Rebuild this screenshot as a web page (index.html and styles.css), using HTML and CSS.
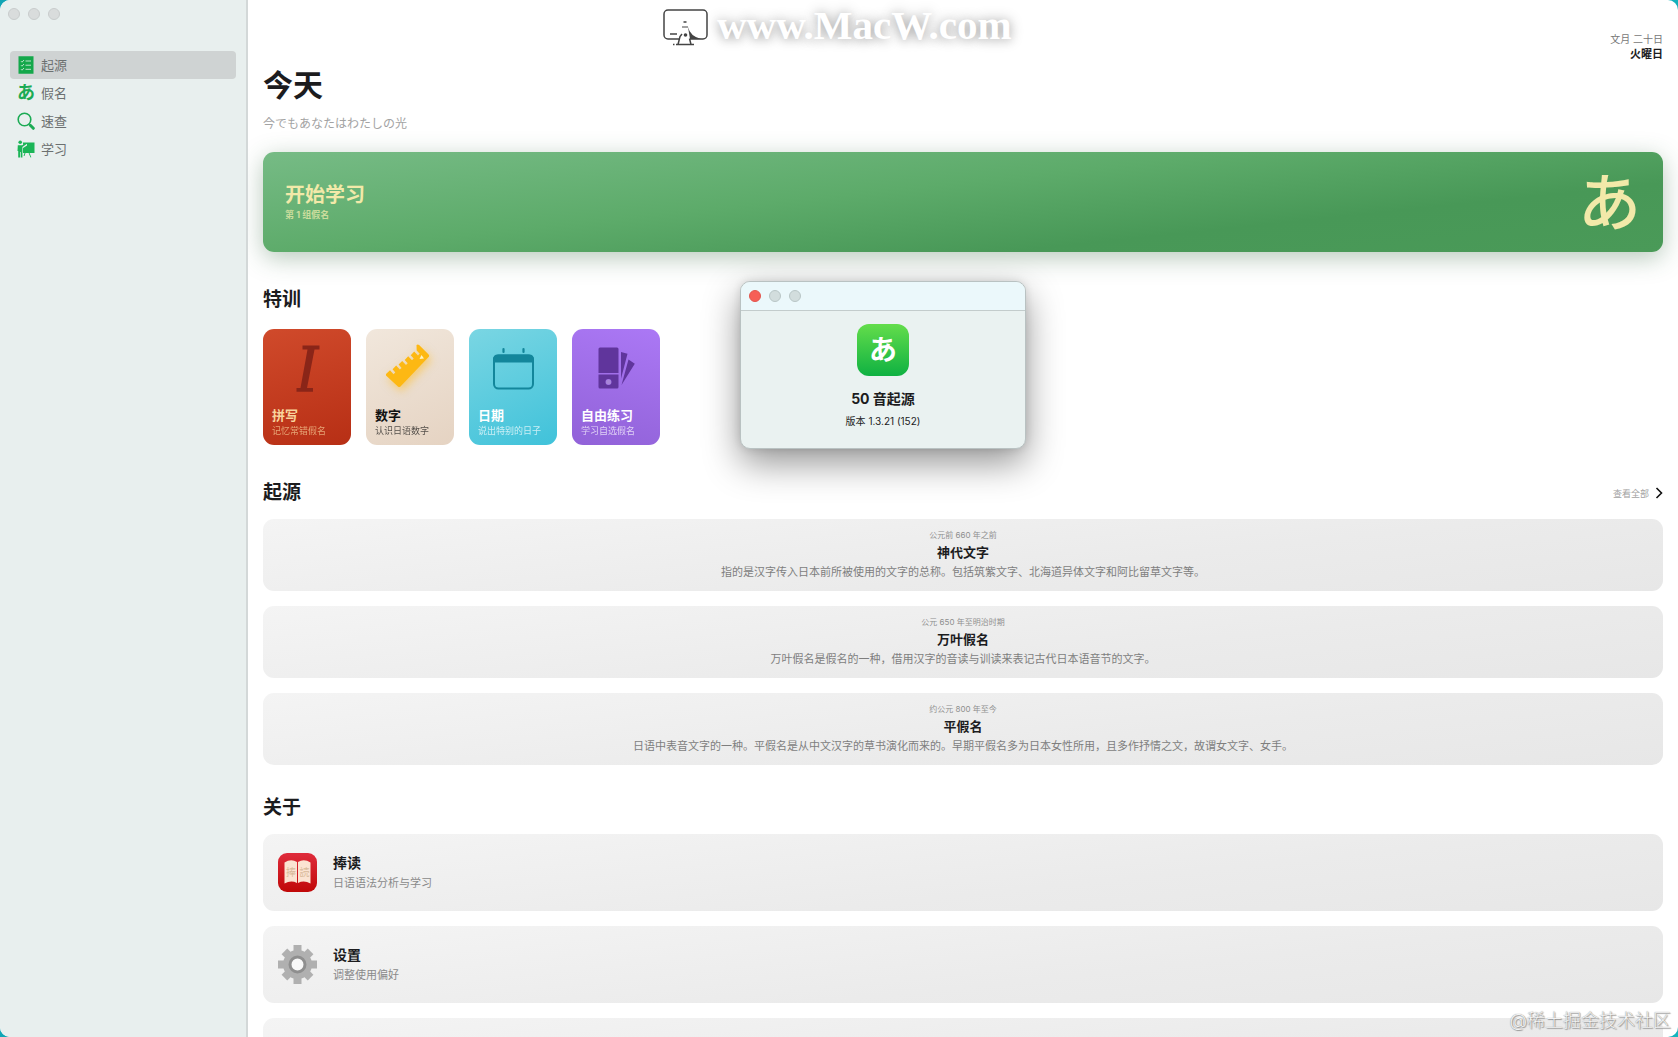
FILE: index.html
```html
<!DOCTYPE html>
<html lang="zh-CN">
<head>
<meta charset="utf-8">
<meta name="viewport" content="width=device-width, initial-scale=1">
<title>50音起源</title>
<link rel="stylesheet" href="styles.css">
</head>
<body>
<div class="window">
  <aside class="sidebar">
    <div class="lights">
      <button class="light" type="button" aria-label="关闭"></button>
      <button class="light" type="button" aria-label="最小化"></button>
      <button class="light" type="button" aria-label="缩放"></button>
    </div>
    <nav class="nav">
      <a class="nav-item nav-item-active" href="#origin">
        <svg class="nav-icon" viewBox="0 0 18 18" aria-hidden="true"><path fill="#14a84b" d="M1.500 0.300h15v17.400h-15z"/><path fill="none" stroke="#b9e3c8" stroke-width="1" d="M4 5.200l1 1 2-2.200M8.500 5H14M4 9.200l1 1 2-2.200M8.500 9.200H14M4 13.200l1 1 2-2.200M8.500 13.300H14"/></svg>
        <span class="nav-label">起源</span></a>
      <a class="nav-item" href="#kana">
        <span class="nav-icon nav-kana" lang="ja" aria-hidden="true">あ</span>
        <span class="nav-label">假名</span></a>
      <a class="nav-item" href="#search">
        <svg class="nav-icon" viewBox="0 0 18 18" aria-hidden="true"><circle cx="7.500" cy="7.500" r="6.300" fill="none" stroke="#1bab54" stroke-width="1.600"/><path stroke="#1bab54" stroke-width="3" stroke-linecap="round" d="M13.300 13.300l3 3"/></svg>
        <span class="nav-label">速查</span></a>
      <a class="nav-item" href="#study">
        <svg class="nav-icon" viewBox="0 0 18 18" aria-hidden="true"><g fill="#1bb557"><circle cx="3.200" cy="2.300" r="1.800"/><path d="M.8 5.200h4.400l3.200-1.700.6 1-3.600 2.500V17.500H3.700V12H3v5.500H1.200V11H.5z"/><path d="M6 2.500h11.500V13H6V8l4-2.500V4L6 5z"/><path d="M12.500 13l1.800 4.200-.8.200L11.600 13zM7.500 13h1l-1 3h-.9z"/></g></svg>
        <span class="nav-label">学习</span></a>
    </nav>
  </aside>

  <main class="main">
    <header class="header">
      <div class="headline">
        <h1 class="title">今天</h1>
        <p class="subtitle" lang="ja">今でもあなたはわたしの光</p>
      </div>
      <div class="today" lang="ja">
        <span class="today-date">文月 二十日</span>
        <span class="today-week">火曜日</span>
      </div>
    </header>

    <button class="banner" type="button">
      <span class="banner-text">
        <span class="banner-title">开始学习</span>
        <span class="banner-sub">第 1 组假名</span>
      </span>
      <span class="banner-kana" lang="ja">あ</span>
    </button>

    <section class="section">
      <h2 class="section-title">特训</h2>
      <div class="drills">
        <button class="drill drill-spell" type="button">
          <svg class="drill-icon" viewBox="0 0 48 52" aria-hidden="true"><path fill="#8a2518" d="M19.500 4.500H36.500v4h-5L24 47H30v3.800H13.500V47H17.500L24.500 8.500h-5z"/></svg>
          <span class="drill-title">拼写</span>
          <span class="drill-sub">记忆常错假名</span>
        </button>
        <button class="drill drill-number" type="button">
          <svg class="drill-icon ruler" viewBox="0 0 48 52" aria-hidden="true"><path fill="#fdb813" d="M0 33L4 29.200l3.500 4 1.800-1.700-2.700-3.200 3.600-3.700 3.600 4 1.800-1.700-3-3.300 3.600-3.700 3.800 4 1.700-1.700-3-3.300 3.500-3.700 3.800 4 1.700-1.700-3-3.300 3.500-3.600 3.800 3.800 1.700-1.700-3-3.300L30.500 4a2 2 0 0 1 2.600 0l9.500 9.500a2 2 0 0 1 0 2.600L14.500 45.500a2 2 0 0 1-2.600 0L0 34.500z"/><path fill="#fff3c4" d="M35.500 14l2.500 3.500-4.500.5z"/></svg>
          <span class="drill-title">数字</span>
          <span class="drill-sub">认识日语数字</span>
        </button>
        <button class="drill drill-date" type="button">
          <svg class="drill-icon" viewBox="0 0 48 52" aria-hidden="true"><rect x="5" y="14.500" width="39" height="33" rx="4.500" fill="none" stroke="#13869b" stroke-width="2"/><path fill="#13869b" d="M4 21.500V18a4.500 4.500 0 0 1 4.500-4.500h32A4.500 4.500 0 0 1 45 18v3.500z"/><path stroke="#13869b" stroke-width="2.200" stroke-linecap="round" d="M14.500 8v3M34.500 8v3"/></svg>
          <span class="drill-title">日期</span>
          <span class="drill-sub">说出特别的日子</span>
        </button>
        <button class="drill drill-free" type="button">
          <svg class="drill-icon" viewBox="0 0 48 52" aria-hidden="true"><g fill="#60359c"><path d="M8 6.500h17a1.500 1.500 0 0 1 1.500 1.500V32h-20V8A1.500 1.500 0 0 1 8 6.500z"/><path fill-rule="evenodd" d="M6.500 33.500h20V46a1.500 1.500 0 0 1-1.500 1.500H8A1.500 1.500 0 0 1 6.500 46zM16.500 38a3 3 0 1 0 0 6 3 3 0 0 0 0-6z"/><path d="M29 11l6.500 1.700-6.500 25zM36.500 18.500l6.300 4.300L29.500 44z"/></g><circle cx="16.500" cy="41" r="2.500" fill="#a886d8"/></svg>
          <span class="drill-title">自由练习</span>
          <span class="drill-sub">学习自选假名</span>
        </button>
      </div>
    </section>

    <section class="section" id="origin">
      <div class="section-head">
        <h2 class="section-title">起源</h2>
        <a class="more" href="#all">查看全部
          <svg class="more-icon" viewBox="0 0 8 12" aria-hidden="true"><path fill="none" stroke="#111" stroke-width="1.600" d="M1.500 1l5 5-5 5"/></svg>
        </a>
      </div>
      <div class="stack">
        <article class="era">
          <span class="era-date">公元前 660 年之前</span>
          <h3 class="era-title">神代文字</h3>
          <p class="era-text">指的是汉字传入日本前所被使用的文字的总称。包括筑紫文字、北海道异体文字和阿比留草文字等。</p>
        </article>
        <article class="era">
          <span class="era-date">公元 650 年至明治时期</span>
          <h3 class="era-title">万叶假名</h3>
          <p class="era-text">万叶假名是假名的一种，借用汉字的音读与训读来表记古代日本语音节的文字。</p>
        </article>
        <article class="era">
          <span class="era-date">约公元 800 年至今</span>
          <h3 class="era-title">平假名</h3>
          <p class="era-text">日语中表音文字的一种。平假名是从中文汉字的草书演化而来的。早期平假名多为日本女性所用，且多作抒情之文，故谓女文字、女手。</p>
        </article>
      </div>
    </section>

    <section class="section section-about">
      <h2 class="section-title">关于</h2>
      <div class="stack">
        <a class="about" href="#reader">
          <svg class="about-icon" viewBox="0 0 39 39" aria-hidden="true">
            <defs><linearGradient id="red" x1="0" y1="0" x2="0" y2="1"><stop offset="0" stop-color="#df2b3b"/><stop offset="1" stop-color="#c00808"/></linearGradient></defs>
            <rect width="39" height="39" rx="9" fill="url(#red)"/>
            <path fill="#fbe3d2" d="M6.500 9.500Q13 5.500 19 9v21Q13 27 6.500 30.500zM20 9q6-3.500 12.500.5v21Q26 27 20 30z"/>
            <text class="book-text" x="8" y="23">捧</text><text class="book-text" x="21.500" y="23">読</text>
          </svg>
          <span class="about-text"><span class="about-title">捧读</span><span class="about-sub">日语语法分析与学习</span></span>
        </a>
        <a class="about" href="#settings">
          <svg class="about-icon" viewBox="0 0 39 39" aria-hidden="true">
            <g fill="#b0b0b0"><circle cx="19.500" cy="19.500" r="14.500"/><path d="M15.500 0h8v39h-8z"/><path d="M0 15.500h39v8H0z"/><path d="M15.500 1h8v37h-8z" transform="rotate(45 19.500 19.500)"/><path d="M15.500 1h8v37h-8z" transform="rotate(-45 19.500 19.500)"/></g>
            <circle cx="19.500" cy="19.500" r="7.500" fill="#f8f8f8" stroke="#8f8f8f" stroke-width="3"/>
          </svg>
          <span class="about-text"><span class="about-title">设置</span><span class="about-sub">调整使用偏好</span></span>
        </a>
        <div class="about"></div>
      </div>
    </section>
  </main>
</div>

<div class="dialog" role="dialog" aria-labelledby="app-name">
  <div class="dialog-bar">
    <button class="light light-close" type="button" aria-label="关闭"></button>
    <button class="light light-off" type="button" aria-label="最小化"></button>
    <button class="light light-off" type="button" aria-label="缩放"></button>
  </div>
  <div class="dialog-body">
    <span class="app-icon" lang="ja">あ</span>
    <strong class="app-name" id="app-name">50 音起源</strong>
    <span class="app-version">版本 1.3.21 (152)</span>
  </div>
</div>

<div class="site-mark">
  <svg class="site-logo" viewBox="0 0 46 38" aria-hidden="true"><path fill="none" stroke="#444" stroke-width="1.500" d="M16 30H5a4 4 0 0 1-4-4V5a4 4 0 0 1 4-4h35a4 4 0 0 1 4 4v21a4 4 0 0 1-4 4H27M15 35.500l2-8 2-2.500M28 35.500l-1.500-6M13 35.500h18M10 35.500h1.500M7 25h7M20.500 13h3"/><path fill="#444" d="M25 18q2 9 13 12H27z"/><circle cx="22.500" cy="26" r="1.800" fill="#444"/><path stroke="#444" d="M19 18h6"/></svg>
  <span class="site-name">www.MacW.com</span>
</div>
<div class="credit">@稀土掘金技术社区</div>
</body>
</html>
```
FILE: styles.css
```css
* {
  box-sizing: border-box;
}

html,
body {
  height: 100%;
}

body {
  position: relative;
  margin: 0;
  overflow: hidden;
  background: linear-gradient(100deg, #12a5b5 60%, #14b5bd 99%);
  color: #1c1c1e;
  font-family: Inter, "Noto Sans CJK SC", sans-serif;
}

[lang="ja"] {
  font-family: Inter, "Noto Sans CJK JP", sans-serif;
}

h1,
h2,
h3,
p {
  margin: 0;
}

button {
  padding: 0;
  border: 0;
  font: inherit;
  text-align: left;
}

a {
  color: inherit;
  text-decoration: none;
}

.window {
  display: flex;
  height: 100%;
  overflow: hidden;
  border-radius: 10px;
  background: #fff;
}

/* Sidebar */

.sidebar {
  flex: 0 0 248px;
  padding: 8px 10px 0;
  border-right: 2px solid #d3d8d8;
  background: #e8efee;
}

.lights {
  display: flex;
  gap: 8px;
  margin-left: -2px;
}

.light {
  width: 12px;
  height: 12px;
  border: 1px solid #c8cccc;
  border-radius: 50%;
  background: #d9dcdc;
}

.nav {
  display: flex;
  flex-direction: column;
  margin-top: 31px;
}

.nav-item {
  display: flex;
  align-items: center;
  gap: 6px;
  height: 28px;
  padding: 0 7px;
  border-radius: 4px;
  color: #6c7070;
  font-size: 13px;
}

.nav-item-active {
  background: #cfd3d3;
}

.nav-icon {
  width: 18px;
  height: 18px;
}

.nav-label {
  padding-bottom: 2px;
}

.nav-kana {
  color: #1bab54;
  font-size: 18px;
  font-weight: 700;
  line-height: 18px;
}

/* Main column */

.main {
  flex: 1;
  min-width: 0;
  padding: 32px 15px 0;
  overflow: hidden;
}

.header {
  display: flex;
  justify-content: space-between;
}

.headline {
  padding-top: 32px;
}

.title {
  font-size: 30px;
  font-weight: 700;
  line-height: 42px;
}

.subtitle {
  margin-top: 9px;
  color: #a3a3a3;
  font-size: 12px;
  line-height: 18px;
}

.today {
  display: flex;
  flex-direction: column;
  align-items: flex-end;
  line-height: 15px;
}

.today-date {
  color: #777;
  font-size: 10px;
}

.today-week {
  font-size: 11px;
  font-weight: 700;
}

.banner {
  display: flex;
  align-items: center;
  justify-content: space-between;
  width: 100%;
  height: 100px;
  margin-top: 19px;
  padding: 0 22px;
  border-radius: 11px;
  background: linear-gradient(174deg, #76bb85 0%, #5dab6a 42%, #489857 72%, #4a9a58 100%);
  box-shadow: 0 6px 24px rgba(50, 100, 60, 0.35);
  color: #f2e9a9;
}

.banner-text {
  display: flex;
  flex-direction: column;
}

.banner-title {
  font-size: 20px;
  font-weight: 700;
  line-height: 26px;
}

.banner-sub {
  color: #cbdd9d;
  font-size: 9px;
  font-weight: 700;
  line-height: 14px;
}

.banner-kana {
  font-size: 63px;
  font-weight: 500;
  line-height: 100px;
}

.section {
  margin-top: 34px;
}

.section-about {
  margin-top: 29px;
}

.section-head {
  display: flex;
  align-items: center;
  justify-content: space-between;
}

.section-title {
  font-size: 19px;
  font-weight: 700;
  line-height: 28px;
}

.more {
  display: flex;
  align-items: center;
  gap: 6px;
  color: #a2a2a2;
  font-size: 9px;
}

.more-icon {
  width: 8px;
  height: 12px;
}

.drills {
  display: flex;
  gap: 15px;
  margin-top: 15px;
}

.drill {
  display: flex;
  flex-direction: column;
  width: 88px;
  height: 116px;
  padding: 12px 0 0 9px;
  border-radius: 11px;
  color: #fff;
  white-space: nowrap;
}

.drill-icon {
  width: 48px;
  height: 52px;
  margin: 0 0 13px 11px;
}

.drill-title {
  font-size: 13px;
  font-weight: 700;
  line-height: 18px;
}

.drill-sub {
  font-size: 9px;
  line-height: 14px;
  opacity: 0.7;
}

.drill-spell {
  background: linear-gradient(165deg, #d04a2b, #b72f15);
  color: #f8d39c;
}

.drill-number {
  background: linear-gradient(155deg, #f1e7dc, #e5d3c2);
  color: #111;
}

.drill-date {
  background: linear-gradient(155deg, #7ad6e3, #40c2da);
}

.drill-free {
  background: linear-gradient(195deg, #ab78f5, #9162d8);
}

.ruler {
  filter: drop-shadow(2px 4px 4px rgba(253, 184, 19, 0.5));
}

.stack {
  display: flex;
  flex-direction: column;
  gap: 15px;
  margin-top: 12px;
}

.era,
.about {
  border-radius: 11px;
  background: linear-gradient(174deg, #f4f4f4, #ebebeb 60%, #e7e7e7);
}

.era {
  display: flex;
  flex-direction: column;
  align-items: center;
  height: 72px;
  padding-top: 9px;
}

.era-date {
  color: #8e8e8e;
  font-size: 8px;
  line-height: 14px;
}

.era-title {
  font-size: 13px;
  font-weight: 700;
  line-height: 20px;
}

.era-text {
  color: #7e7e7e;
  font-size: 11px;
  line-height: 20px;
}

.about {
  display: flex;
  flex-shrink: 0;
  align-items: center;
  gap: 16px;
  height: 77px;
  padding: 0 15px;
}

.about-icon {
  width: 39px;
  height: 39px;
}

.book-text {
  fill: #d8b99a;
  font-size: 10px;
}

.about-text {
  display: flex;
  flex-direction: column;
  line-height: 20px;
}

.about-title {
  font-size: 14px;
  font-weight: 700;
}

.about-sub {
  color: #8a8a8a;
  font-size: 11px;
}

/* Floating version window */

.dialog {
  position: absolute;
  top: 281px;
  left: 740px;
  width: 286px;
  overflow: hidden;
  border: 1px solid #b9c2c2;
  border-radius: 10px;
  background: #eaf2f1;
  box-shadow: 0 14px 36px rgba(0, 0, 0, 0.42), 0 0 8px rgba(0, 0, 0, 0.12);
}

.dialog-bar {
  display: flex;
  align-items: center;
  gap: 8px;
  height: 29px;
  padding: 0 8px;
  border-bottom: 1px solid #c3cccc;
  background: #ebf8fb;
}

.light-close {
  border-color: #e2564e;
  background: #f65f57;
}

.light-off {
  border-color: #b9c6c6;
  background: #d2dddd;
}

.dialog-body {
  display: flex;
  flex-direction: column;
  align-items: center;
  height: 137px;
  padding-top: 13px;
}

.app-icon {
  width: 52px;
  height: 52px;
  border-radius: 12px;
  background: linear-gradient(#63dd4b, #0fb142);
  color: #fff;
  font-size: 28px;
  font-weight: 700;
  line-height: 52px;
  text-align: center;
}

.app-name {
  margin-top: 12px;
  font-size: 14px;
  line-height: 22px;
}

.app-version {
  font-size: 10px;
  line-height: 22px;
}

/* Marks laid over the page */

.site-mark {
  position: absolute;
  top: 0;
  left: 663px;
  display: flex;
  align-items: center;
  gap: 8px;
  height: 50px;
}

.site-logo {
  width: 46px;
  height: 38px;
  margin-top: 6px;
}

.site-name {
  color: #fff;
  font-family: "Liberation Serif", serif;
  font-size: 41px;
  font-weight: 700;
  text-shadow: 0 0 14px rgba(0, 0, 0, 0.3), 0 2px 10px rgba(0, 0, 0, 0.16);
}

.credit {
  position: absolute;
  right: 7px;
  bottom: 3px;
  color: #f4f4f4;
  font-size: 18px;
  font-weight: 300;
  line-height: 26px;
  text-shadow: 0 0 1px #777, 1px 1px 1px #999;
}
```
